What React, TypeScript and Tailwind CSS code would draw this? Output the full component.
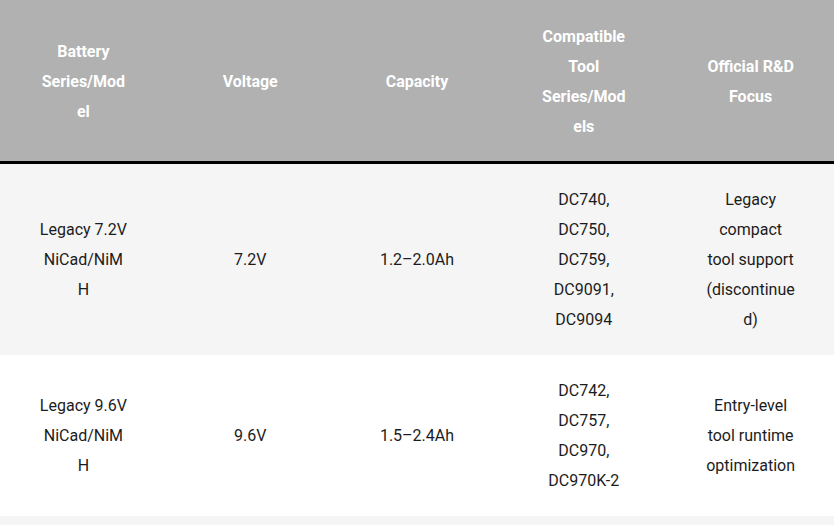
const headers = [
  'Battery Series/Model',
  'Voltage',
  'Capacity',
  'Compatible Tool Series/Models',
  'Official R&D Focus',
];

const rows = [
  {
    series: 'Legacy 7.2V NiCad/NiMH',
    voltage: '7.2V',
    capacity: '1.2–2.0Ah',
    tools: ['DC740,', 'DC750,', 'DC759,', 'DC9091,', 'DC9094'],
    focus: 'Legacy compact tool support (discontinued)',
  },
  {
    series: 'Legacy 9.6V NiCad/NiMH',
    voltage: '9.6V',
    capacity: '1.5–2.4Ah',
    tools: ['DC742,', 'DC757,', 'DC970,', 'DC970K-2'],
    focus: 'Entry-level tool runtime optimization',
  },
  {
    series: 'Legacy 12V NiCad/NiMH',
    voltage: '12V',
    capacity: '1.2–2.4Ah',
    tools: ['DC727,', 'DC756,', 'DC980'],
    focus: 'Mid-range tool power balance',
  },
];

export default function App() {
  return (
    <div
      className="w-[834px] bg-white"
      style={{ fontFamily: 'Roboto, "Liberation Sans", sans-serif' }}
    >
      <table className="w-full table-fixed border-collapse text-[16px] leading-[30px]">
        <thead>
          <tr className="bg-[#b1b1b1] border-b-[3px] border-black">
            {headers.map((h) => (
              <th
                key={h}
                className="px-[38px] pt-[22px] pb-[19px] text-center align-middle font-bold text-white"
                style={{ overflowWrap: 'anywhere' }}
              >
                {h}
              </th>
            ))}
          </tr>
        </thead>
        <tbody>
          {rows.map((r, i) => (
            <tr key={i} className={i % 2 === 0 ? 'bg-[#f5f5f5]' : 'bg-white'}>
              {[r.series, r.voltage, r.capacity, r.tools.join(' '), r.focus].map(
                (cell, j) => (
                  <td
                    key={j}
                    className={`${j === 0 ? 'px-[38.5px]' : 'px-[38px]'} pt-[21px] pb-5 text-center align-middle text-[#1c1c1c]`}
                    style={{ overflowWrap: 'anywhere' }}
                  >
                    {cell}
                  </td>
                ),
              )}
            </tr>
          ))}
        </tbody>
      </table>
    </div>
  );
}
